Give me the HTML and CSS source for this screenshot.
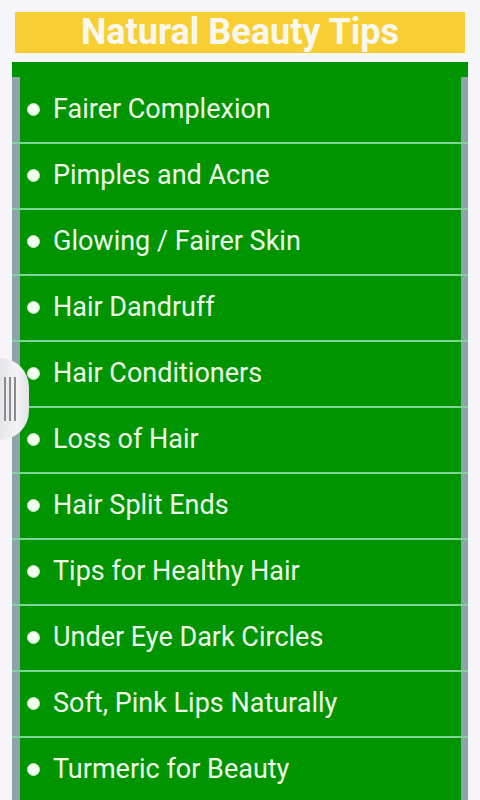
FILE: index.html
```html
<!DOCTYPE html>
<html lang="en">
<head>
    <meta charset="UTF-8">
    <meta name="viewport" content="width=device-width, initial-scale=1.0">
    <title>Natural Beauty Tips</title>
    <link rel="stylesheet" href="styles.css">
</head>
<body>
    <!-- title bar -->
    <header class="title">
        <h1>Natural Beauty Tips</h1>
    </header>

    <!-- list of tips -->
    <section class="panel">
        <ul class="tips">
            <li>Fairer Complexion</li>
            <li>Pimples and Acne</li>
            <li>Glowing / Fairer Skin</li>
            <li>Hair Dandruff</li>
            <li>Hair Conditioners</li>
            <li>Loss of Hair</li>
            <li>Hair Split Ends</li>
            <li>Tips for Healthy Hair</li>
            <li>Under Eye Dark Circles</li>
            <li>Soft, Pink Lips Naturally</li>
            <li>Turmeric for Beauty</li>
        </ul>
    </section>

    <!-- drawer handle -->
    <div class="handle">
        <span></span><span></span><span></span>
    </div>
</body>
</html>
```

FILE: styles.css
```css
* {
    padding: 0px;
    margin: 0px;
    box-sizing: border-box;
}
body {
    background-color: #f6f6f8;
    font-family: Roboto, "Noto Sans", sans-serif;
    height: 800px;
    overflow: hidden;
}
.title {
    margin: 12px 15px 0 15px;
    height: 41px;
    background-color: #f8cf33;
    display: flex;
    align-items: center;
    justify-content: center;
}
.title h1 {
    color: #f8f8f0;
    font-size: 36px;
    font-weight: 700;
    line-height: 41px;
}
.panel {
    margin: 9px 12px 0 12px;
    background-color: #009400;
    padding-top: 15px;
}
.tips {
    list-style: none;
    border-left: 8px solid #8fa3ab;
    border-right: 7px solid #8fa3ab;
}
.tips li {
    height: 66px;
    background-color: #009400;
    color: #eefbe8;
    font-size: 27px;
    display: flex;
    align-items: center;
    padding: 0 0 3px 33px;
    position: relative;
}
.tips li::before {
    content: "";
    position: absolute;
    left: 7px;
    top: 26px;
    width: 11px;
    height: 11px;
    border-radius: 50%;
    background-color: #f2fff0;
    border: 1px solid #c4ecbc;
}
.tips li::after {
    content: "";
    position: absolute;
    z-index: 1;
    left: -8px;
    right: -7px;
    bottom: -1px;
    height: 2px;
    background-color: #7fd49a;
}
.handle {
    position: absolute;
    z-index: 2;
    left: 0;
    top: 358px;
    width: 29px;
    height: 82px;
    border-radius: 0 41px 41px 0;
    background: linear-gradient(90deg, #e6e6ea, #f4f4f6 60%, #e2e2e6);
    display: flex;
    gap: 3px;
    align-items: center;
    padding-left: 4px;
}
.handle span {
    width: 2px;
    height: 44px;
    background-color: #8a8a90;
}
```
